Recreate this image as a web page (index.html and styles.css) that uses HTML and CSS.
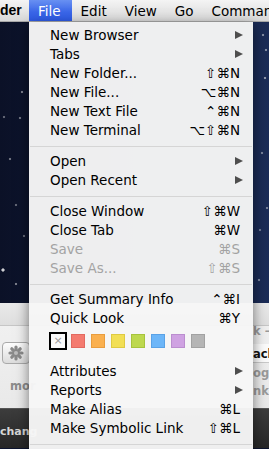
FILE: index.html
```html
<!DOCTYPE html>
<html lang="en">
<head>
    <meta charset="UTF-8">
    <title>File menu</title>
    <link rel="stylesheet" href="styles.css">
</head>
<body>
    <div class="menubar">
        <span class="app">der</span>
        <span class="title active">File</span>
        <span class="title">Edit</span>
        <span class="title">View</span>
        <span class="title">Go</span>
        <span class="title">Commands</span>
    </div>

    <div class="desktop"></div>

    <div class="window">
        <div class="wtitle"></div>
        <div class="wbody">
            <div class="wleft">
                <div class="action-btn">
                    <svg width="16" height="16" viewBox="0 0 16 16">
                        <g stroke="#8a8a8a" stroke-width="3.2" stroke-linecap="round">
                            <line x1="8" y1="2" x2="8" y2="14"/>
                            <line x1="2" y1="8" x2="14" y2="8"/>
                            <line x1="3.8" y1="3.8" x2="12.2" y2="12.2"/>
                            <line x1="12.2" y1="3.8" x2="3.8" y2="12.2"/>
                        </g>
                        <circle cx="8" cy="8" r="2" fill="#bdbdbd"/>
                    </svg>
                </div>
                <div class="wlabel">mor</div>
            </div>
            <div class="wmid"></div>
            <div class="wright">
                <div class="r1">k —</div>
                <div class="r2">ack</div>
                <div class="r3">og</div>
                <div class="r4">nk -</div>
            </div>
        </div>
        <div class="wbar">chang</div>
    </div>

    <!-- the open File menu, drawn over the desktop -->
    <div class="menu">
        <div class="item"><span>New Browser</span><i class="arrow"></i></div>
        <div class="item"><span>Tabs</span><i class="arrow"></i></div>
        <div class="item"><span>New Folder...</span><kbd>⇧⌘N</kbd></div>
        <div class="item"><span>New File...</span><kbd>⌥⌘N</kbd></div>
        <div class="item"><span>New Text File</span><kbd>⌃⌘N</kbd></div>
        <div class="item"><span>New Terminal</span><kbd>⌥⇧⌘N</kbd></div>
        <div class="sep"></div>
        <div class="item"><span>Open</span><i class="arrow"></i></div>
        <div class="item"><span>Open Recent</span><i class="arrow"></i></div>
        <div class="sep"></div>
        <div class="item"><span>Close Window</span><kbd>⇧⌘W</kbd></div>
        <div class="item"><span>Close Tab</span><kbd>⌘W</kbd></div>
        <div class="item disabled"><span>Save</span><kbd>⌘S</kbd></div>
        <div class="item disabled"><span>Save As...</span><kbd>⇧⌘S</kbd></div>
        <div class="sep"></div>
        <div class="item"><span>Get Summary Info</span><kbd>⌃⌘I</kbd></div>
        <div class="item"><span>Quick Look</span><kbd>⌘Y</kbd></div>
        <div class="labels">
            <div class="slot"><span class="label none">×</span></div>
            <div class="slot"><span class="label red"></span></div>
            <div class="slot"><span class="label orange"></span></div>
            <div class="slot"><span class="label yellow"></span></div>
            <div class="slot"><span class="label green"></span></div>
            <div class="slot"><span class="label blue"></span></div>
            <div class="slot"><span class="label purple"></span></div>
            <div class="slot"><span class="label grey"></span></div>
        </div>
        <div class="item"><span>Attributes</span><i class="arrow"></i></div>
        <div class="item"><span>Reports</span><i class="arrow"></i></div>
        <div class="item"><span>Make Alias</span><kbd>⌘L</kbd></div>
        <div class="item"><span>Make Symbolic Link</span><kbd>⇧⌘L</kbd></div>
        <div class="sep"></div>
    </div>
</body>
</html>
```

FILE: styles.css
```css
body {
    margin: 0;
    width: 269px;
    height: 449px;
    overflow: hidden;
    position: relative;
    font-family: "DejaVu Sans", sans-serif;
    background: #0d1530;
}

.menubar {
    height: 21px;
    display: flex;
    align-items: center;
    white-space: nowrap;
    overflow: hidden;
    font-size: 13.5px;
    color: #000;
    background: linear-gradient(#f4f4f4, #d8d8d8);
    border-bottom: 1px solid #a8a8a8;
}
.menubar > span {
    flex-shrink: 0;
}
.app {
    width: 29px;
    font-family: "Liberation Sans", sans-serif;
    font-size: 14px;
    font-weight: bold;
    line-height: 21px;
}
.title {
    padding: 0 9px;
    line-height: 22px;
    height: 22px;
}
.title.active {
    padding: 0 11px 0 9px;
    color: #fff;
    background: linear-gradient(#6890f2, #3a66e8 55%, #2c59e4);
}

.desktop {
    height: 281px;
    background-color: #0e1631;
    background-image:
        radial-gradient(circle at 22px 70px, rgba(255,255,255,.45) 0 1px, transparent 1.6px),
        radial-gradient(circle at 4px 95px, rgba(255,255,255,.35) 0 1px, transparent 1.6px),
        radial-gradient(circle at 20px 96px, rgba(255,255,255,.4) 0 1px, transparent 1.6px),
        radial-gradient(circle at 10px 137px, rgba(255,255,255,.4) 0 1px, transparent 1.6px),
        radial-gradient(circle at 16px 183px, rgba(255,255,255,.35) 0 1px, transparent 1.6px),
        radial-gradient(circle at 24px 214px, rgba(255,255,255,.35) 0 1px, transparent 1.6px),
        radial-gradient(circle at 3px 248px, rgba(255,255,255,.8) 0 1.2px, transparent 2px),
        radial-gradient(circle at 16px 262px, rgba(255,255,255,.45) 0 1px, transparent 1.6px),
        radial-gradient(circle at 263px 13px, rgba(255,255,255,.45) 0 1px, transparent 1.6px),
        radial-gradient(circle at 266px 28px, rgba(255,255,255,.45) 0 1px, transparent 1.6px),
        radial-gradient(circle at 265px 56px, rgba(255,255,255,.5) 0 1px, transparent 1.6px),
        radial-gradient(circle at 262px 131px, rgba(255,255,255,.4) 0 1px, transparent 1.6px),
        radial-gradient(circle at 267px 186px, rgba(255,255,255,.4) 0 1px, transparent 1.6px),
        radial-gradient(circle at 260px 208px, rgba(255,255,255,.35) 0 1px, transparent 1.6px),
        radial-gradient(circle at 259px 258px, rgba(255,255,255,.4) 0 1px, transparent 1.6px),
        linear-gradient(to right, #0b1127, #101a38 40%, #1b2c57);
}

.window {
    height: 145px;
    display: flex;
    flex-direction: column;
    background: #eeeeee;
}
.wtitle {
    height: 22px;
    background: linear-gradient(#e9e9e9, #dedede);
    border-bottom: 1px solid #c6c6c6;
}
.wbody {
    height: 82px;
    display: grid;
    grid-template-columns: 29px 1fr 16px;
    background: linear-gradient(#f0f0f0, #e9e9e9);
}
.action-btn {
    width: 26px;
    height: 20px;
    margin: 16px 0 0 2px;
    border: 1px solid #a9a9a9;
    border-radius: 4px;
    background: linear-gradient(#fdfdfd, #dcdcdc);
    display: flex;
    align-items: center;
    justify-content: center;
}
.wlabel {
    margin: 15px 0 0 10px;
    font-size: 11.5px;
    font-weight: bold;
    line-height: 14px;
    color: #8c8c8c;
}
.wright {
    font-size: 11.5px;
    font-weight: bold;
    white-space: nowrap;
    overflow: hidden;
    color: #9a9a9a;
}
.r1 {
    height: 13px;
    line-height: 10px;
}
.r2 {
    height: 18px;
    margin-top: 5px;
    line-height: 20px;
    color: #111;
    background: #fbfbfb;
    border-bottom: 1px solid #c9c9c9;
}
.r3 {
    height: 18px;
    line-height: 20px;
}
.r4 {
    height: 18px;
    line-height: 20px;
}
.wbar {
    flex: 1;
    padding: 16px 0 0 0;
    font-size: 11px;
    font-weight: bold;
    line-height: 14px;
    color: #d6d6d6;
    background: linear-gradient(#3c3c3c, #272727);
    border-top: 1px solid #555;
}

.menu {
    position: absolute;
    top: 22px;
    left: 29px;
    width: 224px;
    height: 440px;
    padding-top: 3px;
    background: rgba(246, 246, 246, 0.97);
    box-shadow: 0 4px 12px rgba(0, 0, 0, 0.5);
    font-size: 13.5px;
    color: #000;
}
.item {
    height: 19px;
    display: flex;
    align-items: center;
    justify-content: space-between;
    padding: 0 13px 0 21px;
    white-space: nowrap;
}
.item kbd {
    font-family: inherit;
    font-size: inherit;
}
.item.disabled {
    color: #a3a3a3;
}
.arrow {
    width: 0;
    height: 0;
    margin-right: -3px;
    border-left: 8px solid #4e4e4e;
    border-top: 4.5px solid transparent;
    border-bottom: 4.5px solid transparent;
}
.sep {
    height: 1px;
    margin: 7px 1px 4px;
    background: #d5d5d5;
}

.labels {
    height: 29px;
    padding: 5px 0 0 19px;
    display: flex;
    align-items: flex-start;
}
.slot {
    width: 20px;
    height: 18px;
    display: flex;
    align-items: center;
    justify-content: center;
}
.label {
    width: 12px;
    height: 12px;
    border: 1px solid;
}
.label.none {
    width: 14px;
    height: 14px;
    border: 2px solid #000;
    background: #fafafa;
    color: #9a9a9a;
    font-size: 11px;
    line-height: 13px;
    text-align: center;
}
.red { background: #f47b70; border-color: #e26a60; }
.orange { background: #fab04f; border-color: #e99d3e; }
.yellow { background: #f2df55; border-color: #dfca42; }
.green { background: #bdd84e; border-color: #a7c33d; }
.blue { background: #6db6f8; border-color: #5aa2e6; }
.purple { background: #cfa2e2; border-color: #bb8ecf; }
.grey { background: #b5b5b5; border-color: #a2a2a2; }
```
